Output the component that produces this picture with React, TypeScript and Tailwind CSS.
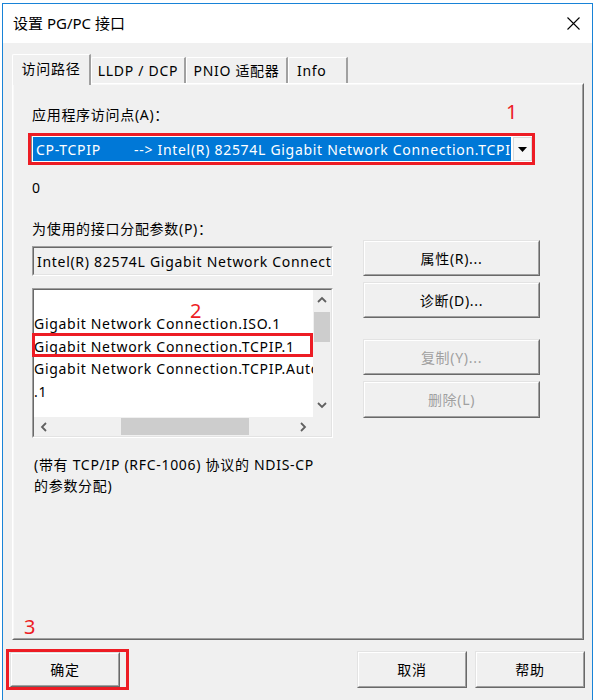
import React from 'react';

function Raised({ className = '', children, disabled = false }: { className?: string; children?: React.ReactNode; disabled?: boolean }) {
  return (
    <div className={`border border-t-[#e3e3e3] border-l-[#e3e3e3] border-r-[#696969] border-b-[#696969] ${className}`}>
      <div className={`w-full h-full border border-t-white border-l-white border-r-[#a0a0a0] border-b-[#a0a0a0] bg-[#f0f0f0] flex items-center justify-center ${disabled ? 'text-[#a0a0a0]' : 'text-black'}`}>
        {children}
      </div>
    </div>
  );
}

function Sunken({ className = '', innerClassName = '', children }: { className?: string; innerClassName?: string; children?: React.ReactNode }) {
  return (
    <div className={`border border-t-[#a0a0a0] border-l-[#a0a0a0] border-r-white border-b-white ${className}`}>
      <div className={`w-full h-full border border-t-[#696969] border-l-[#696969] border-r-[#e3e3e3] border-b-[#e3e3e3] ${innerClassName}`}>
        {children}
      </div>
    </div>
  );
}

function Chevron({ dir }: { dir: 'up' | 'down' | 'left' | 'right' }) {
  const d =
    dir === 'up' ? 'M1 6 L5 2 L9 6' : dir === 'down' ? 'M1 2 L5 6 L9 2' : dir === 'left' ? 'M6 1 L2 5 L6 9' : 'M2 1 L6 5 L2 9';
  const w = dir === 'up' || dir === 'down' ? 10 : 8;
  const h = dir === 'up' || dir === 'down' ? 8 : 10;
  return (
    <svg width={w} height={h} viewBox={`0 0 ${w} ${h}`}>
      <path d={d} fill="none" stroke="#606060" strokeWidth="1.8" />
    </svg>
  );
}

function Tab({ label, w, active = false, left = false }: { label: string; w: string; active?: boolean; left?: boolean }) {
  return (
    <div
      className={`${w} ${active ? 'h-[31px] -mb-[2px] relative z-10 pb-[3px]' : 'h-[26px]'} bg-[#f0f0f0] border-t border-l border-t-white border-l-white border-r-2 border-r-[#a0a0a0] rounded-tl-[2px] flex items-center ${left ? 'justify-start pl-[8px]' : 'justify-center'} shrink-0`}
    >
      <span className="whitespace-nowrap">{label}</span>
    </div>
  );
}

const listItems = [
  'Gigabit Network Connection.ISO.1',
  'Gigabit Network Connection.TCPIP.1',
  'Gigabit Network Connection.TCPIP.Auto.1',
  '.1',
];

export default function App() {
  return (
    <div className="w-[595px] h-[700px] bg-white overflow-hidden pt-[3px] pl-[2px] font-['Noto_Sans','Noto_Sans_CJK_SC',sans-serif] text-[14px] tracking-[0.7px] text-black">
      <div className="w-[591px] h-[720px] border border-[#1883d7] flex flex-col">
        {/* Title bar */}
        <div className="h-[39px] bg-white flex items-center justify-between pl-[10px] pr-[12px] shrink-0">
          <span className="text-[15px] tracking-normal">设置 PG/PC 接口</span>
          <svg width="13" height="13" viewBox="0 0 13 13">
            <path d="M0.5 0.5 L12.5 12.5 M12.5 0.5 L0.5 12.5" stroke="#000" strokeWidth="1.1" />
          </svg>
        </div>

        {/* Body */}
        <div className="flex-1 bg-[#f0f0f0] pt-[11px] pl-[9px]">
          {/* Tabs */}
          <div className="h-[29px] flex items-end">
            <Tab label="访问路径" w="w-[79px]" active />
            <Tab label="LLDP / DCP" w="w-[95px]" />
            <Tab label="PNIO 适配器" w="w-[102px]" />
            <Tab label="Info" w="w-[60px]" left />
          </div>

          {/* Panel */}
          <div className="relative w-[572px] h-[557px] border border-t-white border-l-white border-r-[#696969] border-b-[#696969]">
            <div className="w-full h-full border border-t-[#f8f8f8] border-l-[#f8f8f8] border-r-[#a0a0a0] border-b-[#a0a0a0] pl-[18px] flex flex-col">
              <div className="mt-[21px] h-[18px] leading-[18px] whitespace-nowrap">应用程序访问点(A)：</div>

              {/* Combo with red highlight */}
              <div className="mt-[9px] -ml-[4px] w-[507px] h-[32px] border-[3px] border-[#ed1c24]">
                <div className="w-full h-full bg-white border-l border-l-[#8a8a8a] flex items-stretch py-[1px] pl-[1px] pr-0">
                  <div className="flex-1 bg-[#0078d7] text-white overflow-hidden whitespace-nowrap flex items-center pl-[3px]">
                    <span className="inline-block w-[98px] shrink-0">CP-TCPIP</span>
                    <span>--&gt; Intel(R) 82574L Gigabit Network Connection.TCPIP.1</span>
                  </div>
                  <div className="w-[19px] ml-[2px] bg-[#f7f7f7] border border-[#dadada] flex items-center justify-center">
                    <svg width="9" height="5" viewBox="0 0 9 5">
                      <path d="M0 0 L9 0 L4.5 5 Z" fill="#000" />
                    </svg>
                  </div>
                </div>
              </div>

              <div className="mt-[14px] h-[18px] leading-[18px]">0</div>

              <div className="mt-[23px] h-[18px] leading-[18px] whitespace-nowrap">为使用的接口分配参数(P)：</div>

              {/* Two columns */}
              <div className="mt-[2px] flex items-start">
                <div className="w-[301px] flex flex-col">
                  <Sunken className="mt-[6px] h-[30px]" innerClassName="bg-[#f0f0f0] flex items-center pl-[3px] overflow-hidden whitespace-nowrap">
                    Intel(R) 82574L Gigabit Network Connection
                  </Sunken>

                  <div className="relative mt-[12px]">
                    <Sunken className="h-[150px]" innerClassName="bg-white grid grid-cols-[279px_18px] grid-rows-[127px_19px] overflow-hidden">
                      <div className="overflow-hidden whitespace-nowrap pt-[23px]">
                        {listItems.map((t) => (
                          <div key={t} className="h-[22.5px] leading-[22.5px]">
                            {t}
                          </div>
                        ))}
                      </div>
                      <div className="bg-[#f0f0f0] flex flex-col items-stretch">
                        <div className="h-[19px] flex items-center justify-center">
                          <Chevron dir="up" />
                        </div>
                        <div className="mt-[3px] h-[30px] mx-[1px] bg-[#cdcdcd]" />
                        <div className="flex-1" />
                        <div className="h-[22px] flex items-center justify-center pb-[3px]">
                          <Chevron dir="down" />
                        </div>
                      </div>
                      <div className="bg-[#f0f0f0] flex items-stretch">
                        <div className="w-[20px] flex items-center justify-center">
                          <Chevron dir="left" />
                        </div>
                        <div className="ml-[67px] w-[128px] my-[1px] bg-[#cdcdcd]" />
                        <div className="flex-1" />
                        <div className="w-[22px] flex items-center justify-center pl-[2px]">
                          <Chevron dir="right" />
                        </div>
                      </div>
                      <div className="bg-[#f0f0f0]" />
                    </Sunken>
                    {/* red box 2 */}
                    <div className="absolute left-0 top-[45px] w-[281px] h-[24px] border-[3px] border-[#ed1c24]" />
                    <span className="absolute left-[158px] top-[13px] text-[20px] leading-[20px] tracking-normal text-[#ed1c24]">2</span>
                  </div>
                </div>

                <div className="ml-[30px] w-[177px] flex flex-col">
                  <Raised className="h-[36px]">属性(R)...</Raised>
                  <Raised className="mt-[6px] h-[36px]">诊断(D)...</Raised>
                  <Raised className="mt-[21px] h-[36px]" disabled>复制(Y)...</Raised>
                  <Raised className="mt-[6px] h-[37px]" disabled>删除(L)</Raised>
                </div>
              </div>

              <div className="mt-[16px] leading-[21px] ml-[2px] whitespace-nowrap">
                <div>(带有 TCP/IP (RFC-1006) 协议的 NDIS-CP</div>
                <div>的参数分配)</div>
              </div>
            </div>

            <span className="absolute left-[493px] top-[18px] text-[20px] leading-[20px] tracking-normal text-[#ed1c24]">1</span>
            <span className="absolute left-[11px] top-[533px] text-[20px] leading-[20px] tracking-normal text-[#ed1c24]">3</span>
          </div>

          {/* Bottom buttons */}
          <div className="mt-[9px] flex items-start">
            <div className="-ml-[6px] w-[123px] h-[41px] border-[3px] border-[#ed1c24] pl-[1px]">
              <Raised className="w-[110px] h-[35px]">确定</Raised>
            </div>
            <Raised className="ml-[228px] mt-[2px] w-[110px] h-[37px]">取消</Raised>
            <Raised className="ml-[8px] mt-[2px] w-[110px] h-[37px]">帮助</Raised>
          </div>
        </div>
      </div>
    </div>
  );
}
